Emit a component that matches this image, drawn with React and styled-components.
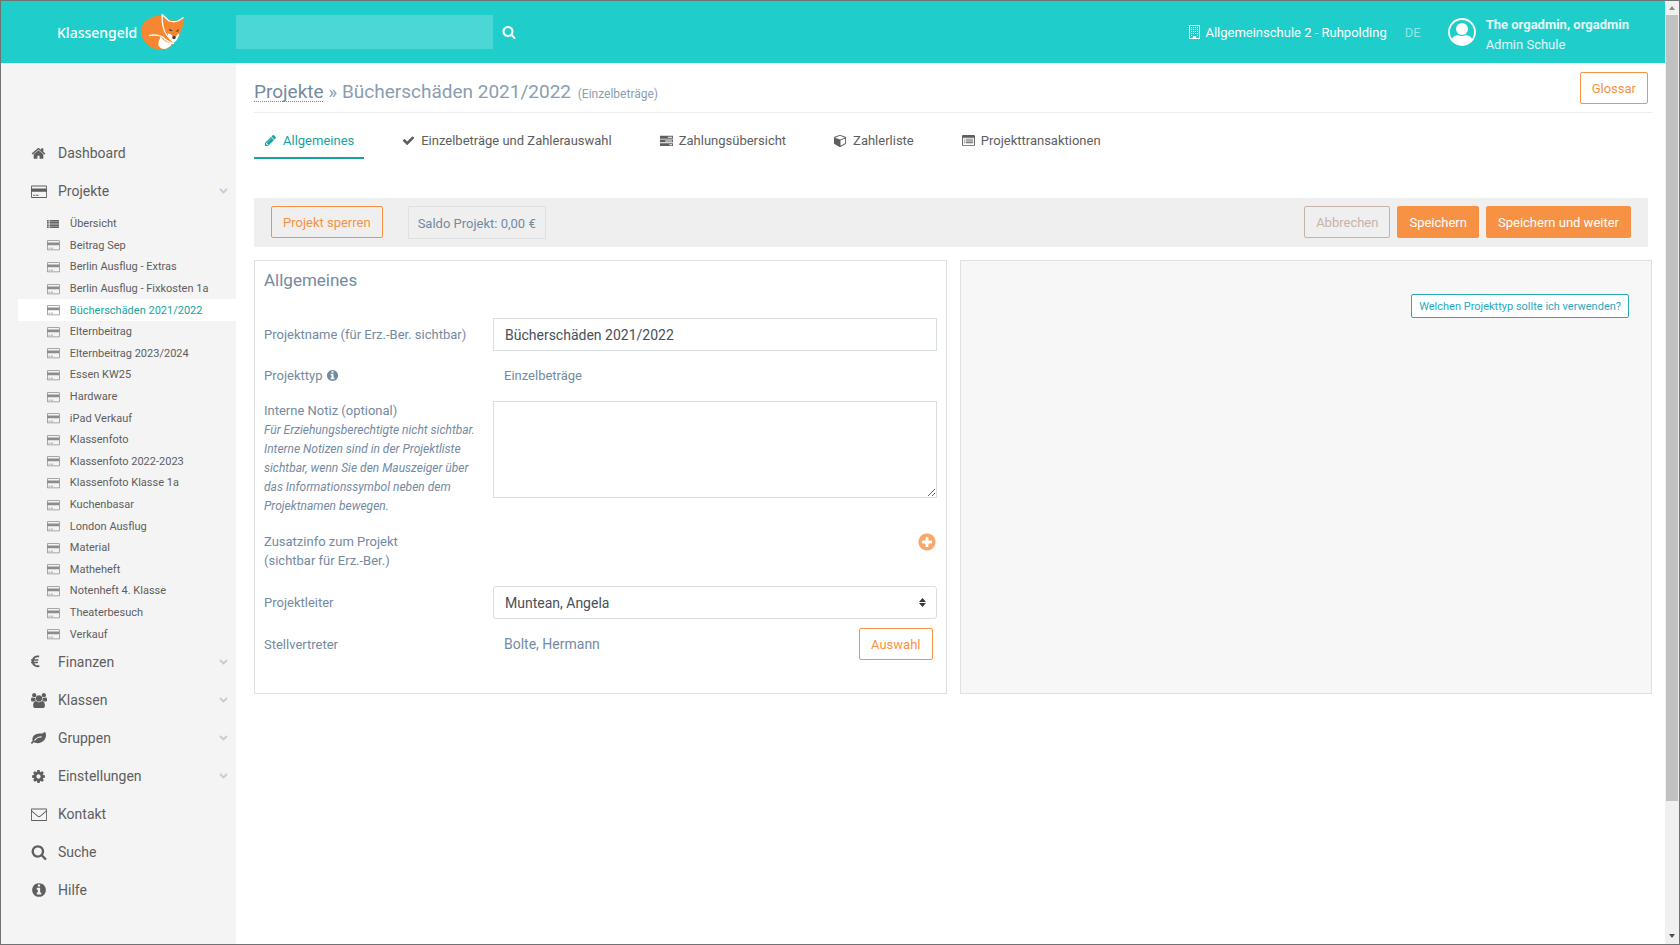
import React, { useState } from "react";
import styled, { createGlobalStyle, css } from "styled-components";

const GlobalStyle = createGlobalStyle`
  :root {
    --turquoise: #1fcecb;
    --teal: #17a2a0;
    --info: #2aa9be;
    --orange: #f79245;
    --slate: #748aa1;
    --grey: #5e5e5e;
    --line: #dee0e2;
  }

  * {
    box-sizing: border-box;
  }

  body {
    margin: 0;
    font-family: Roboto, "Liberation Sans", sans-serif;
    font-size: 13px;
    color: var(--slate);
    background: #fff;
  }

  button,
  input,
  select,
  textarea {
    font: inherit;
  }
`;

const ICONS = {
  home: {
    d: "M1472 992v480q0 26-19 45t-45 19h-384v-384h-256v384h-384q-26 0-45-19t-19-45v-480q0-1 .5-3t.5-3l575-474 575 474q1 2 1 6zm223-69l-62 74q-8 9-21 11h-3q-13 0-21-7l-692-577-692 577q-12 8-24 7-13-2-21-11l-62-74q-8-10-7-23.5t11-21.5l719-599q32-26 76-26t76 26l244 204v-195q0-14 9-23t23-9h192q14 0 23 9t9 23v408l219 182q10 8 11 21.5t-7 23.5z",
  },
  card: {
    w: 1920,
    d: "M100 192h1720q100 0 100 100v1272q0 100-100 100h-1720q-100 0-100-100v-1272q0-100 100-100zM110 302v230h1700v-230zM110 930v624h1700v-624zM240 1290h220v120h-220zM560 1290h340v120h-340z",
  },
  list: {
    d: "M0 1280h256v192h-256zM0 960h256v192h-256zM0 640h256v192h-256zM0 320h256v192h-256zM384 1280h1408v192h-1408zM384 960h1408v192h-1408zM384 640h1408v192h-1408zM384 320h1408v192h-1408z",
  },
  euro: {
    w: 1100,
    d: "M976 1229l35 159q3 12-3 22.5t-17 14.5l-5 1q-4 2-10.5 3.5t-16 4.5-21.5 5.5-25.5 5-30 5-33.5 4.5-36.5 3-38.5 1q-234 0-409-130.5t-238-351.5h-95q-13 0-22.5-9.5t-9.500-22.500v-113q0-13 9.500-22.500t22.500-9.500h66q-2-57 1-105h-67q-14 0-23-9t-9-23v-114q0-14 9-23t23-9h98q67-210 243.500-338t400.500-128q102 0 194 23 11 3 20 15 6 11 3 24l-43 159q-3 13-14 19.500t-24 2.500l-4-1q-4-1-11.500-2.500l-17.500-3.500-22.500-3.500-26-3-29-2.500-29.500-1q-126 0-226 64t-150 176h468q16 0 25 12 10 12 7 26l-24 114q-5 26-32 26h-488q-3 37 0 105h459q15 0 25 12 9 12 6 27l-24 112q-2 11-11 18.500t-20 7.500h-387q48 117 149.500 185.500t228.500 68.500q18 0 36-1.500t33.500-3.500 29.500-4.500 24.500-5 18.500-4.500l12-3 5-2q13-5 26 2 12 7 15 21z",
  },
  users: {
    w: 1920,
    d: "M593 896q-162 5-265 128h-134q-82 0-138-40.500t-56-118.500q0-353 124-353 6 0 43.500 21t97.500 42.500 119 21.500q67 0 133-23-5 37-5 66 0 139 81 256zm1071 637q0 120-73 189.500t-194 69.500h-874q-121 0-194-69.500t-73-189.500q0-53 3.500-103.500t14-109 26.500-108.500 43-97.500 62-81 85.500-53.500 111.500-20q10 0 43 21.500t73 48 107 48 135 21.500 135-21.500 107-48 73-48 43-21.500q61 0 111.500 20t85.500 53.500 62 81 43 97.500 26.500 108.500 14 109 3.500 103.500zm-1024-1277q0 106-75 181t-181 75-181-75-75-181 75-181 181-75 181 75 75 181zm704 384q0 159-112.500 271.500t-271.500 112.500-271.500-112.500-112.500-271.500 112.500-271.500 271.500-112.500 271.500 112.500 112.500 271.500zm576 225q0 78-56 118.500t-138 40.500h-134q-103-123-265-128 81-117 81-256 0-29-5-66 66 23 133 23 59 0 119-21.500t97.500-42.500 43.500-21q124 0 124 353zm-128-609q0 106-75 181t-181 75-181-75-75-181 75-181 181-75 181 75 75 181z",
  },
  leaf: {
    d: "M1280 704q0-26-19-45t-45-19q-172 0-318 49.5t-259.5 134-235.5 219.5q-19 21-19 45 0 26 19 45t45 19q24 0 45-19 27-24 74-71t67-66q137-124 268.5-176t313.5-52q26 0 45-19t19-45zm512-198q0 95-20 193-46 224-184.5 383t-357.5 268q-214 108-438 108-148 0-286-47-15-5-88-42t-96-37q-16 0-39.5 32t-45 70-52.500 70-60 32q-43 0-63.500-17.500t-45.500-59.500q-2-4-6-11t-5.500-10-3-9.500-1.500-13.500q0-35 31-73.500t68-65.500 68-56 31-48q0-4-14-38t-16-44q-9-51-9-104 0-115 43.500-220t119-184.500 170.500-139 204-95.500q55-18 145-25.500t179.500-9 178.500-6 163.500-24 113.500-56.500l29.500-29.500 29.500-28 27-20 36.500-16 43.500-4.500q39 0 70.500 46t47.500 112 24 124 8 96z",
  },
  cog: {
    w: 1664,
    d: "M1152 896q0-106-75-181t-181-75-181 75-75 181 75 181 181 75 181-75 75-181zm512-109v222q0 12-8 23t-20 13l-185 28q-19 54-39 91 35 50 107 138 10 12 10 25t-9 23q-27 37-99 108t-94 71q-12 0-26-9l-138-108q-44 23-91 38-16 136-29 186-7 28-36 28h-222q-14 0-24.500-8.500t-11.500-21.500l-28-184q-49-16-90-37l-141 107q-10 9-25 9-14 0-25-11-126-114-165-168-7-10-7-23 0-12 8-23 15-21 51-66.500t54-70.500q-27-50-41-99l-183-27q-13-2-21-12.500t-8-23.500v-222q0-12 8-23t19-13l186-28q14-46 39-92-40-57-107-138-10-12-10-24 0-10 9-23 26-36 98.500-107.500t94.500-71.500q13 0 26 10l138 107q44-23 91-38 16-136 29-186 7-28 36-28h222q14 0 24.500 8.500t11.500 21.500l28 184q49 16 90 37l142-107q9-9 24-9 13 0 25 10 129 119 165 170 7 8 7 22 0 12-8 23-15 21-51 66.500t-54 70.500q26 50 41 98l183 28q13 2 21 12.500t8 23.500z",
  },
  mail: {
    w: 1920,
    d: "M80 192h1760q80 0 80 80v1312q0 80-80 80h-1760q-80 0-80-80v-1312q0-80 80-80zM110 302v1252h1700v-1252zM110 430L830 1040Q960 1150 1090 1040L1810 430V580L1150 1130Q960 1290 770 1130L110 580z",
  },
  search: {
    d: "M1216 832q0-185-131.500-316.500t-316.500-131.500-316.500 131.500-131.500 316.500 131.500 316.500 316.500 131.500 316.500-131.500 131.500-316.500zm512 832q0 52-38 90t-90 38q-54 0-90-38l-343-342q-179 124-399 124-143 0-273.500-55.500t-225-150-150-225-55.500-273.500 55.500-273.500 150-225 225-150 273.500-55.500 273.500 55.500 225 150 150 225 55.500 273.500q0 220-124 399l343 343q37 37 37 90z",
  },
  info: {
    d: "M1152 1376v-160q0-14-9-23t-23-9h-96v-512q0-14-9-23t-23-9h-320q-14 0-23 9t-9 23v160q0 14 9 23t23 9h96v320h-96q-14 0-23 9t-9 23v160q0 14 9 23t23 9h448q14 0 23-9t9-23zm-128-896v-160q0-14-9-23t-23-9h-192q-14 0-23 9t-9 23v160q0 14 9 23t23 9h192q14 0 23-9t9-23zm640 416q0 209-103 385.500t-279.500 279.500-385.500 103-385.500-103-279.500-279.500-103-385.500 103-385.500 279.500-279.500 385.500-103 385.500 103 279.500 279.500 103 385.500z",
  },
  plus: {
    d: "M1344 960v-128q0-26-19-45t-45-19h-256v-256q0-26-19-45t-45-19h-128q-26 0-45 19t-19 45v256h-256q-26 0-45 19t-19 45v128q0 26 19 45t45 19h256v256q0 26 19 45t45 19h128q26 0 45-19t19-45v-256h256q26 0 45-19t19-45zm320-64q0 209-103 385.500t-279.500 279.500-385.500 103-385.500-103-279.500-279.500-103-385.500 103-385.500 279.500-279.500 385.500-103 385.500 103 279.500 279.500 103 385.500z",
  },
  pencil: {
    d: "M491 1536l91-91-235-235-91 91v107h128v128h107zm523-928q0-22-22-22-10 0-17 7l-542 542q-7 7-7 17 0 22 22 22 10 0 17-7l542-542q7-7 7-17zm-54-192l416 416-832 832h-416v-416zm683 96q0 53-37 90l-166 166-416-416 166-165q36-38 90-38 53 0 91 38l235 234q37 39 37 91z",
  },
  check: {
    d: "M1671 566q0 40-28 68l-724 724-136 136q-28 28-68 28t-68-28l-136-136-362-362q-28-28-28-68t28-68l136-136q28-28 68-28t68 28l294 295 656-657q28-28 68-28t68 28l136 136q28 28 28 68z",
  },
  server: {
    d: "M0 256h1792v384h-1792zM1088 384v128h576v-128zM0 768h1792v384h-1792zM704 896v128h960v-128zM0 1280h1792v384h-1792zM1280 1408v128h384v-128z",
  },
  cube: {
    d: "M896 1629l640-349v-636l-640 233v752zm-64-865l698-254-698-254-698 254zm832-252v768q0 35-18 65t-49 47l-704 384q-28 16-61 16t-61-16l-704-384q-31-17-49-47t-18-65v-768q0-40 23-73t61-47l704-256q22-8 44-8t44 8l704 256q38 14 61 47t23 73z",
  },
  table: {
    d: "M160 128h1472q160 0 160 160v1216q0 160-160 160h-1472q-160 0-160-160v-1216q0-160 160-160zM128 512v992q0 32 32 32h1472q32 0 32-32v-992zM256 640h128v128h-128zM512 640h1024v128h-1024zM256 896h128v128h-128zM512 896h1024v128h-1024zM256 1152h128v128h-128zM512 1152h1024v128h-1024z",
  },
  building: {
    w: 1408,
    d: "M64 0h1280q64 0 64 64v1664q0 64-64 64h-1280q-64 0-64-64v-1664q0-64 64-64zM128 128v1536h384v-256h384v256h384v-1536zM256 256h128v128h-128zM512 256h128v128h-128zM768 256h128v128h-128zM1024 256h128v128h-128zM256 512h128v128h-128zM512 512h128v128h-128zM768 512h128v128h-128zM1024 512h128v128h-128zM256 768h128v128h-128zM512 768h128v128h-128zM768 768h128v128h-128zM1024 768h128v128h-128zM256 1024h128v128h-128zM512 1024h128v128h-128zM768 1024h128v128h-128zM1024 1024h128v128h-128zM256 1280h128v128h-128zM1024 1280h128v128h-128z",
  },
};

const Glyph = styled.svg`
  display: block;
  flex: none;
  fill: currentColor;
`;

const Icon = ({ name, size = 16 }) => {
  const { w = 1792, d } = ICONS[name];
  return (
    <Glyph
      height={size}
      width={(size * w) / 1792}
      viewBox={`0 0 ${w} 1792`}
      fillRule="evenodd"
      aria-hidden="true"
    >
      <path d={d} />
    </Glyph>
  );
};

const Chevron = () => (
  <Glyph width="9" height="6" viewBox="0 0 9 6" aria-hidden="true">
    <path d="M1 1l3.500 3.500L8 1" fill="none" stroke="#bccfe0" strokeWidth="1.800" />
  </Glyph>
);

const Fox = () => (
  <Glyph width="44" height="37" viewBox="0 0 44 37" aria-hidden="true">
    <path
      d="M21 1C9 2 0 8 0 17c0 9 9 19 20 19 7 0 11-4 14-9 5-5 8-13 9.500-24L37 7l-9-1z"
      fill="#f6862f"
    />
    <path d="M20 22.500c-2 3-3 6-2.500 9 1 3 5 4.500 8 3 3-1.500 5-3 5.500-5-5-1-9-3-11-7z" fill="#fff" />
    <path d="M26.500 19.500c1 4 3 8 6.500 9 2.500-1 4.500-5 5.500-9-2 .5-3 2-4 4h-2.500c-1-2.500-2.500-4-5.500-4z" fill="#fff" />
    <path
      d="M8 21.500c5-1 9-.5 13 1 3 3 6 6 12 7M33 28c-6-4-10-10-11-16-.8-4-1-7-.8-11.500L28 7c3 1 6 1 9 0l5.500-3.500"
      fill="none"
      stroke="#fff"
      strokeWidth="1.300"
    />
    <path d="M28 14.500l4 2.500h-3zM38 15l-3.500 2.500h2.500z" fill="#4a3a35" />
    <circle cx="33" cy="23.500" r="1.700" fill="#4a3a35" />
  </Glyph>
);

const Avatar = () => (
  <Glyph width="28" height="28" viewBox="0 0 28 28" aria-hidden="true">
    <circle cx="14" cy="14" r="13" fill="none" stroke="#fff" strokeWidth="1.800" />
    <circle cx="14" cy="11" r="6" />
    <path d="M3.500 21.500c1.500-3 4-4 6.500-4.500 2.500 1.500 5.500 1.500 8 0 2.500.5 5 1.500 6.500 4.500C21.500 25.500 18 27 14 27s-7.500-1.500-10.500-5.500z" />
  </Glyph>
);

/* ---------- frame ---------- */

const Frame = styled.div`
  display: flex;
  min-height: 100vh;
  border: 1px solid #6f7374;
`;

const Page = styled.div`
  flex: 1;
  min-width: 0;
  display: flex;
  flex-direction: column;
`;

const ScrollTrack = styled.div`
  width: 14px;
  background: #f0f0f0;
  display: flex;
  flex-direction: column;
  align-items: center;
  padding: 5px 0 6px;
  gap: 5px;
`;

const ScrollThumb = styled.div`
  flex: 1;
  width: 12px;
  background: linear-gradient(#c1c1c1 86%, transparent 86%);
`;

const Arrow = styled.span`
  border: 3px solid transparent;
  ${({ $up }) =>
    $up
      ? css`
          border-bottom: 4px solid #8c8c8c;
          border-top: 0;
        `
      : css`
          border-top: 4px solid #505050;
          border-bottom: 0;
        `}
`;

/* ---------- header ---------- */

const Header = styled.header`
  height: 62px;
  display: flex;
  align-items: center;
  background: var(--turquoise);
  color: #fff;
  padding-right: 36px;
`;

const Brand = styled.a`
  width: 235px;
  padding-left: 56px;
  display: flex;
  align-items: center;
  gap: 4px;
  font-family: "Noto Sans", sans-serif;
  font-weight: 500;
  font-size: 14px;
  color: #fff;
  text-decoration: none;
`;

const SearchForm = styled.form`
  display: flex;
  align-items: center;
  gap: 9px;
  margin-right: auto;

  input {
    width: 257px;
    height: 34px;
    padding: 0 10px;
    border: 0;
    color: #fff;
    background: rgba(255, 255, 255, 0.2);
  }

  button {
    padding: 0;
    border: 0;
    background: none;
    color: #fff;
  }
`;

const School = styled.a`
  display: flex;
  align-items: center;
  gap: 5px;
  color: #fff;
  text-decoration: none;
`;

const Language = styled.a`
  margin: 0 27px 0 18px;
  color: rgba(255, 255, 255, 0.5);
  text-decoration: none;
`;

const User = styled.div`
  display: flex;
  align-items: center;
  gap: 10px;
  line-height: 20px;
  color: #e4f6f6;

  svg {
    color: #fff;
  }

  div {
    padding-top: 5px;
  }

  strong,
  span {
    display: block;
  }
`;

/* ---------- sidebar ---------- */

const Body = styled.div`
  flex: 1;
  display: flex;
`;

const Sidebar = styled.nav`
  width: 235px;
  flex: none;
  padding-top: 71px;
  background: #f4f4f4;
  color: var(--grey);
  font-size: 14px;
`;

const NavItem = styled.a`
  display: flex;
  align-items: center;
  height: 38px;
  padding: 0 8px 0 30px;
  color: inherit;
  text-decoration: none;

  > span:first-child {
    width: 27px;
  }

  > svg {
    margin-left: auto;
  }
`;

/* rows share the height evenly */
const SubList = styled.ul`
  height: 432px;
  margin: 3px 0 -2px;
  padding: 0;
  list-style: none;
  display: grid;
  grid-auto-rows: 1fr;
  font-size: 11px;
`;

const SubItem = styled.a`
  display: flex;
  align-items: center;
  height: 100%;
  gap: ${({ $strong }) => ($strong ? "11px" : "10px")};
  margin-left: 17px;
  padding-left: 29px;
  text-decoration: none;
  color: ${({ $active }) => ($active ? "var(--teal)" : "var(--grey)")};
  background: ${({ $active }) => ($active ? "#fff" : "none")};

  svg {
    color: ${({ $strong }) => ($strong ? "#333" : "#8c8c8c")};
  }
`;

/* ---------- content ---------- */

const Main = styled.main`
  flex: 1;
  min-width: 0;
  padding: 9px 13px 0 18px;
`;

const TitleBar = styled.div`
  display: flex;
  align-items: flex-start;
  justify-content: space-between;
  height: 41px;
  padding-right: 4px;
  border-bottom: 1px solid #ececec;
`;

const Title = styled.h1`
  margin: 0;
  font-size: 19px;
  font-weight: 400;
  line-height: 40px;
  color: #8a9db1;

  a {
    color: var(--slate);
    text-decoration: underline dotted 1px;
    text-underline-offset: 3px;
    text-decoration-skip-ink: none;
  }

  small {
    margin-left: 2px;
    font-size: 12px;
  }
`;

const Button = styled.button`
  height: ${({ $small }) => ($small ? "24px" : "32px")};
  padding: 0 ${({ $small }) => ($small ? "7px" : "11px")};
  font-size: ${({ $small }) => ($small ? "11px" : "13px")};
  border: 1px solid currentColor;
  border-radius: 2px;
  white-space: nowrap;
  background: none;
  color: var(--orange);

  ${({ $variant }) =>
    $variant === "solid" &&
    css`
      background: var(--orange);
      border-color: var(--orange);
      color: #fff;
    `}
  ${({ $variant }) =>
    $variant === "muted" &&
    css`
      color: #c6b3a8;
    `}
  ${({ $variant }) =>
    $variant === "info" &&
    css`
      background: #fff;
      color: var(--info);
    `}
`;

const Tabs = styled.div`
  display: flex;
  gap: 28px;
  margin-top: 11px;
`;

const Tab = styled.a`
  display: flex;
  align-items: center;
  gap: 6px;
  height: 35px;
  padding: 0 10px;
  text-decoration: none;
  color: ${({ $active }) => ($active ? "var(--teal)" : "var(--grey)")};
  border-bottom: 2px solid ${({ $active }) => ($active ? "var(--teal)" : "transparent")};
`;

const Toolbar = styled.div`
  display: flex;
  align-items: flex-start;
  gap: 7px;
  height: 49px;
  margin: 39px 4px 13px 0;
  padding: 8px 17px;
  background: #efefef;
`;

const Balance = styled.div`
  margin: 0 auto 0 18px;
  padding: 2px 9px 0;
  line-height: 29px;
  border: 1px solid var(--line);
`;

const Columns = styled.div`
  display: grid;
  grid-template-columns: 1fr 1fr;
  gap: 13px;
`;

const Panel = styled.section`
  min-height: 434px;
  padding: 0 9px;
  border: 1px solid var(--line);
  background: ${({ $muted }) => ($muted ? "#f7f7f7" : "#fff")};
`;

const HelpPanel = styled(Panel)`
  padding: 33px 22px;
  text-align: right;
`;

const PanelTitle = styled.h2`
  margin: 0;
  padding-bottom: 19px;
  font-size: 17px;
  font-weight: 400;
  line-height: 38px;
`;

const Row = styled.div`
  display: grid;
  grid-template-columns: 229px 1fr;
  align-items: ${({ $top }) => ($top ? "start" : "center")};
  margin-bottom: ${({ $gap = 9 }) => $gap}px;
`;

const Label = styled.label`
  line-height: 19px;

  svg {
    display: inline-block;
    vertical-align: -2px;
  }

  em {
    display: block;
    width: 216px;
    padding-top: 1px;
    font-size: 12px;
  }
`;

const Field = styled.div`
  display: flex;
  align-items: center;
  justify-content: space-between;
  padding-left: 11px;
  padding-right: ${({ $inset }) => ($inset ? "4px" : "0")};
  font-size: ${({ $inset }) => ($inset ? "14px" : "13px")};
`;

const control = css`
  width: 100%;
  padding: 0 11px;
  font-size: 14px;
  color: #495057;
  background: #fff;
  border: 1px solid #d9dee3;
  border-radius: 0;
`;

const Input = styled.input`
  ${control}
  height: 33px;
`;

const Textarea = styled.textarea`
  ${control}
  display: block;
  height: 97px;
`;

const SelectBox = styled.div`
  flex: 1;
  display: grid;
  align-items: center;

  > * {
    grid-area: 1 / 1;
  }

  svg {
    justify-self: end;
    margin-right: 11px;
    color: #343a40;
    pointer-events: none;
  }
`;

const Select = styled.select`
  ${control}
  height: 33px;
  border-radius: 3px;
  appearance: none;
`;

const RoundButton = styled.button`
  margin-left: auto;
  padding: 0;
  border: 0;
  background: none;
  color: #f9a76b;
`;

const projects = [
  "Übersicht",
  "Beitrag Sep",
  "Berlin Ausflug - Extras",
  "Berlin Ausflug - Fixkosten 1a",
  "Bücherschäden 2021/2022",
  "Elternbeitrag",
  "Elternbeitrag 2023/2024",
  "Essen KW25",
  "Hardware",
  "iPad Verkauf",
  "Klassenfoto",
  "Klassenfoto 2022-2023",
  "Klassenfoto Klasse 1a",
  "Kuchenbasar",
  "London Ausflug",
  "Material",
  "Matheheft",
  "Notenheft 4. Klasse",
  "Theaterbesuch",
  "Verkauf",
];

const navigation = [
  { label: "Dashboard", icon: "home" },
  { label: "Projekte", icon: "card", open: true, more: true },
  { label: "Finanzen", icon: "euro", more: true },
  { label: "Klassen", icon: "users", more: true },
  { label: "Gruppen", icon: "leaf", more: true },
  { label: "Einstellungen", icon: "cog", more: true },
  { label: "Kontakt", icon: "mail" },
  { label: "Suche", icon: "search", size: 16 },
  { label: "Hilfe", icon: "info", size: 16 },
];

const tabs = [
  { label: "Allgemeines", icon: "pencil" },
  { label: "Einzelbeträge und Zahlerauswahl", icon: "check" },
  { label: "Zahlungsübersicht", icon: "server" },
  { label: "Zahlerliste", icon: "cube" },
  { label: "Projekttransaktionen", icon: "table" },
];

const TopBar = () => (
  <Header>
    <Brand href="#">
      Klassengeld <Fox />
    </Brand>
    <SearchForm onSubmit={(e) => e.preventDefault()}>
      <input type="search" aria-label="Suche" />
      <button type="submit" aria-label="Suchen">
        <Icon name="search" size={14} />
      </button>
    </SearchForm>
    <School href="#">
      <Icon name="building" size={14} />
      Allgemeinschule 2 - Ruhpolding
    </School>
    <Language href="#">DE</Language>
    <User>
      <Avatar />
      <div>
        <strong>The orgadmin, orgadmin</strong>
        <span>Admin Schule</span>
      </div>
    </User>
  </Header>
);

const SideNav = () => (
  <Sidebar>
    {navigation.map((item) => (
      <React.Fragment key={item.label}>
        <NavItem href="#">
          <span>
            <Icon name={item.icon} size={item.size || 15} />
          </span>
          {item.label}
          {item.more && <Chevron />}
        </NavItem>
        {item.open && (
          <SubList>
            {projects.map((name, i) => (
              <li key={name}>
                <SubItem href="#" $active={i === 4} $strong={i === 0}>
                  <Icon name={i === 0 ? "list" : "card"} size={12} />
                  {name}
                </SubItem>
              </li>
            ))}
          </SubList>
        )}
      </React.Fragment>
    ))}
  </Sidebar>
);

const ProjectForm = () => {
  const [name, setName] = useState("Bücherschäden 2021/2022");

  return (
    <Panel>
      <PanelTitle>Allgemeines</PanelTitle>
      <Row $gap={15}>
        <Label htmlFor="name">Projektname (für Erz.-Ber. sichtbar)</Label>
        <Input id="name" value={name} onChange={(e) => setName(e.target.value)} />
      </Row>
      <Row $gap={16}>
        <Label as="span">
          Projekttyp <Icon name="info" size={13} />
        </Label>
        <Field>Einzelbeträge</Field>
      </Row>
      <Row $top $gap={16}>
        <Label htmlFor="note">
          Interne Notiz (optional)
          <em>
            Für Erziehungsberechtigte nicht sichtbar. Interne Notizen sind in der
            Projektliste sichtbar, wenn Sie den Mauszeiger über das
            Informationssymbol neben dem Projektnamen bewegen.
          </em>
        </Label>
        <Textarea id="note" />
      </Row>
      <Row $top $gap={16}>
        <Label as="span">
          Zusatzinfo zum Projekt
          <br />
          (sichtbar für Erz.-Ber.)
        </Label>
        <RoundButton type="button" aria-label="Zusatzinfo hinzufügen">
          <Icon name="plus" size={20} />
        </RoundButton>
      </Row>
      <Row>
        <Label htmlFor="leader">Projektleiter</Label>
        <SelectBox>
          <Select id="leader">
            <option>Muntean, Angela</option>
          </Select>
          <Glyph width="7" height="9" viewBox="0 0 7 9" aria-hidden="true">
            <path d="M0 4l3.500-4L7 4zM0 5h7L3.500 9z" />
          </Glyph>
        </SelectBox>
      </Row>
      <Row>
        <Label as="span">Stellvertreter</Label>
        <Field $inset>
          Bolte, Hermann
          <Button type="button">Auswahl</Button>
        </Field>
      </Row>
    </Panel>
  );
};

export const App = () => {
  return (
    <>
      <GlobalStyle />
      <Frame>
        <Page>
          <TopBar />
          <Body>
            <SideNav />
            <Main>
              <TitleBar>
                <Title>
                  <a href="#">Projekte</a> » Bücherschäden 2021/2022{" "}
                  <small>(Einzelbeträge)</small>
                </Title>
                <Button type="button">Glossar</Button>
              </TitleBar>
              <Tabs>
                {tabs.map((tab, i) => (
                  <Tab key={tab.label} href="#" $active={i === 0}>
                    <Icon name={tab.icon} size={13} />
                    {tab.label}
                  </Tab>
                ))}
              </Tabs>
              <Toolbar>
                <Button type="button">Projekt sperren</Button>
                <Balance>Saldo Projekt: 0,00 €</Balance>
                <Button type="button" $variant="muted">
                  Abbrechen
                </Button>
                <Button type="button" $variant="solid">
                  Speichern
                </Button>
                <Button type="button" $variant="solid">
                  Speichern und weiter
                </Button>
              </Toolbar>
              <Columns>
                <ProjectForm />
                <HelpPanel $muted>
                  <Button type="button" $small $variant="info">
                    Welchen Projekttyp sollte ich verwenden?
                  </Button>
                </HelpPanel>
              </Columns>
            </Main>
          </Body>
        </Page>
        <ScrollTrack aria-hidden="true">
          <Arrow $up />
          <ScrollThumb />
          <Arrow />
        </ScrollTrack>
      </Frame>
    </>
  );
};

export default App;
